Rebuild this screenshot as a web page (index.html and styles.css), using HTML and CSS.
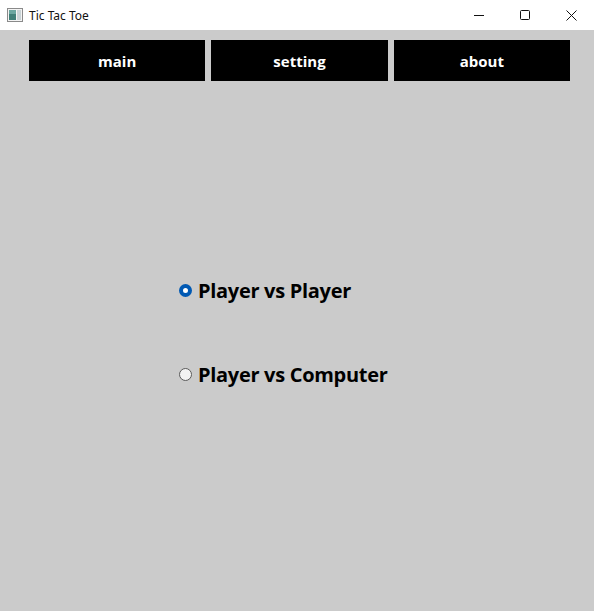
FILE: index.html
```html
<!DOCTYPE html>
<html>
<head>
<meta charset="utf-8">
<link rel="stylesheet" href="styles.css">
</head>
<body>
<div class="window">
  <div class="titlebar">
    <div class="title-left">
      <svg class="app-icon" width="16" height="16" viewBox="0 0 16 16">
        <rect x="0.5" y="1.5" width="15" height="13" fill="#f4f4f4" stroke="#8a8a8a"/>
        <rect x="2" y="3" width="7" height="10" fill="#3f7f78"/>
        <rect x="2" y="3" width="7" height="4" fill="#6aa6a0"/>
        <rect x="10" y="3" width="4" height="10" fill="#c9d3d6"/>
      </svg>
      <span class="title-text">Tic Tac Toe</span>
    </div>
    <div class="controls">
      <span class="ctl">
        <svg width="10" height="10" viewBox="0 0 10 10"><path d="M0 5.5H10" stroke="#111" stroke-width="1"/></svg>
      </span>
      <span class="ctl">
        <svg width="10" height="10" viewBox="0 0 10 10"><rect x="0.5" y="0.5" width="9" height="9" rx="1" fill="none" stroke="#111" stroke-width="1"/></svg>
      </span>
      <span class="ctl">
        <svg width="11" height="11" viewBox="0 0 11 11"><path d="M0.5 0.5L10.5 10.5M10.5 0.5L0.5 10.5" stroke="#111" stroke-width="1"/></svg>
      </span>
    </div>
  </div>
  <div class="content">
    <nav class="tabs">
      <div class="tab">main</div>
      <div class="tab">setting</div>
      <div class="tab">about</div>
    </nav>
    <div class="options">
      <label class="option">
        <span class="radio checked"></span>
        <span class="opt-text">Player vs Player</span>
      </label>
      <label class="option">
        <span class="radio"></span>
        <span class="opt-text">Player vs Computer</span>
      </label>
    </div>
  </div>
</div>
</body>
</html>
```

FILE: styles.css
```css
html, body {
  margin: 0;
  padding: 0;
}
body {
  width: 594px;
  height: 611px;
  overflow: hidden;
  font-family: "Open Sans", "Noto Sans", sans-serif;
}
.window {
  width: 594px;
  height: 611px;
  display: flex;
  flex-direction: column;
  background: #cbcbcb;
}
.titlebar {
  height: 30px;
  background: #ffffff;
  display: flex;
  justify-content: space-between;
  align-items: center;
  flex-shrink: 0;
}
.title-left {
  display: flex;
  align-items: center;
  padding-left: 7px;
  gap: 6px;
}
.title-text {
  font-family: "Noto Sans", "Open Sans", sans-serif;
  font-size: 12px;
  color: #111;
}
.controls {
  display: flex;
  height: 30px;
}
.ctl {
  width: 46px;
  height: 30px;
  display: flex;
  align-items: center;
  justify-content: center;
}
.content {
  flex: 1;
  display: flex;
  flex-direction: column;
  padding: 10px 24px 0 29px;
}
.tabs {
  display: flex;
  gap: 6px;
}
.tab {
  flex: 1;
  height: 41px;
  background: #000;
  color: #fff;
  display: flex;
  align-items: center;
  justify-content: center;
  font-weight: 700;
  font-size: 15px;
}
.options {
  display: flex;
  flex-direction: column;
  padding-left: 150px;
  padding-top: 197px;
  gap: 59px;
}
.option {
  display: flex;
  align-items: center;
  gap: 6px;
  height: 25px;
}
.radio {
  width: 13px;
  height: 13px;
  box-sizing: border-box;
  border-radius: 50%;
  border: 1px solid #5a5a5a;
  background: #f3f3f3;
  flex-shrink: 0;
}
.radio.checked {
  border: 4px solid #0059b3;
  background: #fff;
}
.opt-text {
  font-weight: 700;
  font-size: 20px;
  letter-spacing: -0.3px;
  color: #000;
}
```
